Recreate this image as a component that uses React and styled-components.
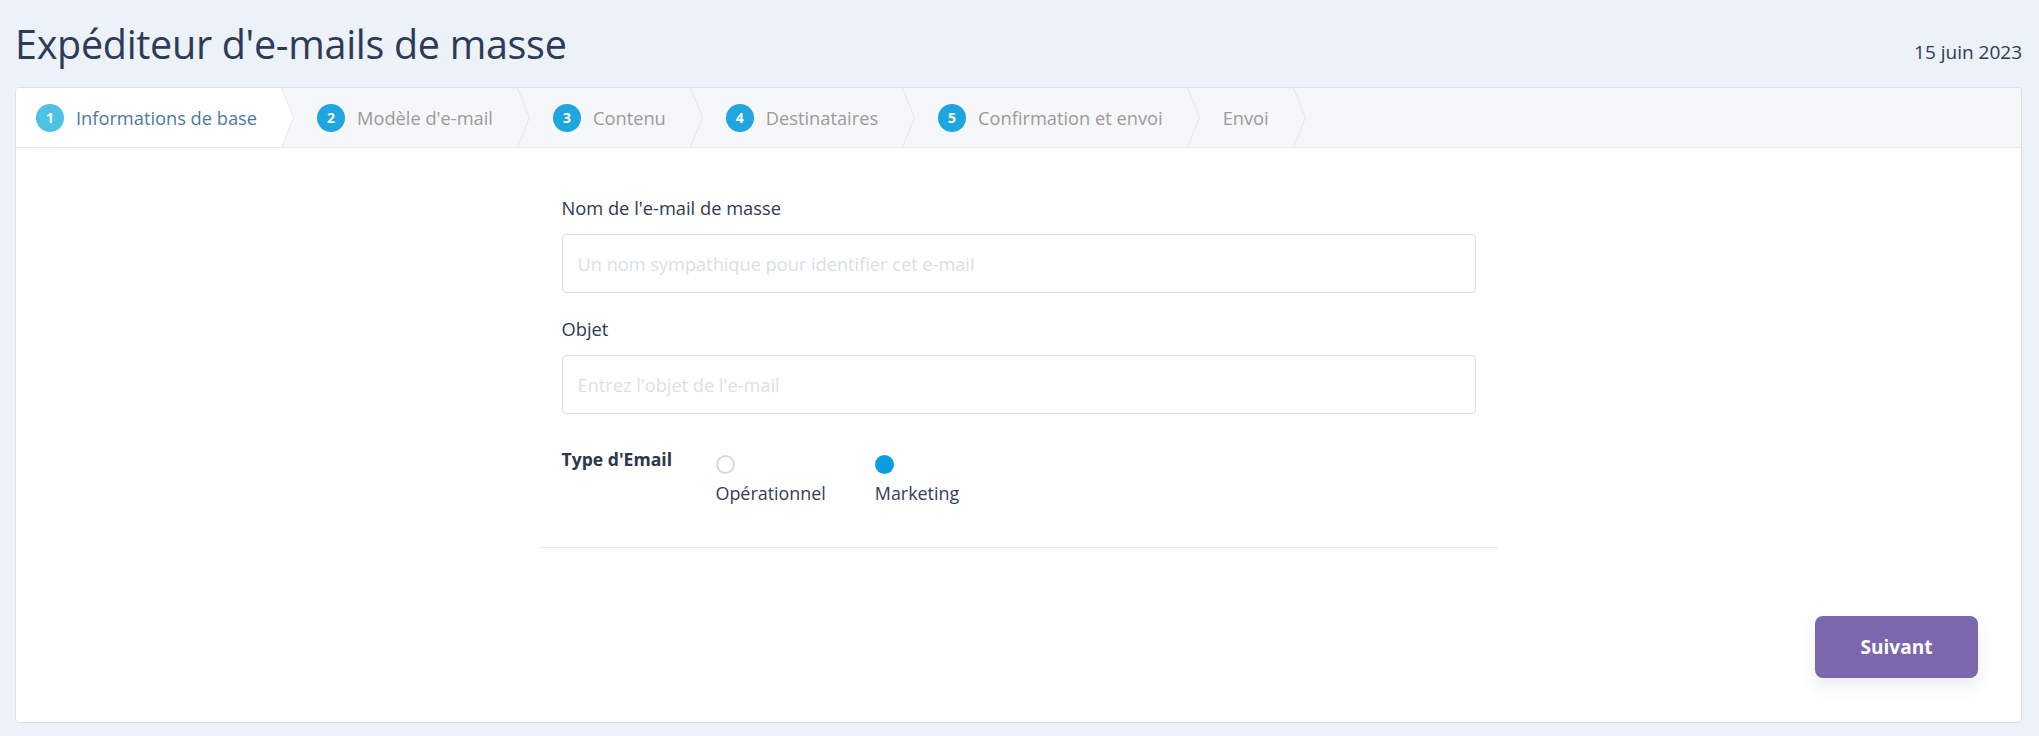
import React from "react";
import styled, { createGlobalStyle } from "styled-components";

const Global = createGlobalStyle`
  html, body { margin: 0; padding: 0; background: #edf1f8; }
  body { font-family: "Open Sans", "Noto Sans", sans-serif; color: #2c3a52; }
  * { box-sizing: border-box; }
`;

const Page = styled.div`
  padding: 0 17px 14px 15px;
  display: flex;
  flex-direction: column;
`;

const Header = styled.header`
  display: flex;
  justify-content: space-between;
  align-items: baseline;
  padding-top: 18px;
  margin-bottom: 17px;
`;

const Title = styled.h1`
  margin: 0;
  font-size: 39.5px;
  line-height: 52px;
  font-weight: 400;
  color: #2c3b57;
  letter-spacing: -0.3px;
`;

const DateText = styled.span`
  font-size: 19px;
  color: #2c3b57;
`;

const Card = styled.section`
  background: #fff;
  border: 1px solid #dbe0e8;
  border-radius: 4px;
  display: flex;
  flex-direction: column;
  overflow: hidden;
`;

const Steps = styled.nav`
  display: flex;
  height: 60px;
  background: #f6f7f9;
  border-bottom: 1px solid #e6e9ee;
`;

const Step = styled.div`
  position: relative;
  display: flex;
  align-items: center;
  gap: 12px;
  padding: 0 25px 0 ${(p) => (p.$first ? 20 : 35)}px;
  background: ${(p) => (p.$active ? "#fff" : "transparent")};
  font-size: 18.25px;
  color: ${(p) => (p.$active ? "#4a7aa3" : "#9a9a9a")};
  white-space: nowrap;

  &::after {
    content: "";
    position: absolute;
    top: 0;
    right: -12px;
    width: 12px;
    height: 100%;
    background: ${(p) => (p.$active ? "#fff" : "#f6f7f9")};
    clip-path: polygon(0 0, 100% 50%, 0 100%);
    z-index: 1;
  }
`;

const Chevron = styled.svg`
  position: absolute;
  top: 0;
  right: -13px;
  width: 14px;
  height: 59px;
  z-index: 2;
  overflow: visible;
`;

const StepNum = styled.span`
  display: inline-flex;
  align-items: center;
  justify-content: center;
  width: 28px;
  height: 28px;
  border-radius: 50%;
  background: ${(p) => (p.$active ? "#4fc1e4" : "#1fa6df")};
  color: #fff;
  font-size: 14px;
  font-weight: 700;
`;

const FormArea = styled.div`
  width: 958px;
  margin: 0 auto;
  padding: 46px 22px 40px;
  border-bottom: 1px solid #e8ebf0;
  display: flex;
  flex-direction: column;
`;

const Field = styled.div`
  display: flex;
  flex-direction: column;
  gap: 13px;
  margin-bottom: 22px;
`;

const Label = styled.label`
  font-size: 18.3px;
  line-height: 27px;
  color: #2d3a52;
`;

const Input = styled.input`
  height: 59px;
  border: 1px solid #d9dde8;
  border-radius: 4px;
  padding: 0 15px;
  font-family: inherit;
  font-size: 18.2px;
  color: #2d3a52;
  outline: none;
  &::placeholder { color: #d9dfea; }
`;

const TypeRow = styled.div`
  display: flex;
  align-items: flex-start;
  margin-top: 10px;
`;

const TypeLabel = styled.span`
  width: 154px;
  font-size: 17.6px;
  line-height: 27px;
  font-weight: 700;
  color: #2b374c;
`;

const Options = styled.div`
  display: flex;
  gap: 49px;
`;

const Option = styled.label`
  display: flex;
  flex-direction: column;
  align-items: flex-start;
  gap: 6px;
  padding-top: 9px;
  font-size: 17.9px;
  line-height: 27px;
  color: #33405a;
`;

const Radio = styled.span`
  width: 19px;
  height: 19px;
  border-radius: 50%;
  border: ${(p) => (p.$checked ? "none" : "2.5px solid #d4d8e3")};
  background: ${(p) => (p.$checked ? "#0b9de1" : "#fff")};
`;

const Footer = styled.div`
  display: flex;
  justify-content: flex-end;
  padding: 68px 43px 44px;
`;

const Button = styled.button`
  width: 163px;
  height: 62px;
  border: none;
  border-radius: 8px;
  background: #7a67ad;
  color: #fff;
  font-family: inherit;
  font-size: 19px;
  font-weight: 700;
  box-shadow: 0 8px 16px rgba(60, 70, 110, 0.1);
  cursor: pointer;
`;

const steps = [
  { n: 1, label: "Informations de base" },
  { n: 2, label: "Modèle d'e-mail" },
  { n: 3, label: "Contenu" },
  { n: 4, label: "Destinataires" },
  { n: 5, label: "Confirmation et envoi" },
  { n: null, label: "Envoi" },
];

export default function App() {
  return (
    <>
      <Global />
      <Page>
        <Header>
          <Title>Expéditeur d'e-mails de masse</Title>
          <DateText>15 juin 2023</DateText>
        </Header>
        <Card>
          <Steps>
            {steps.map((s, i) => (
              <Step key={s.label} $first={i === 0} $active={i === 0}>
                {s.n && <StepNum $active={i === 0}>{s.n}</StepNum>}
                {s.label}
                <Chevron viewBox="0 0 14 59">
                  <polyline points="0.5,0 12.5,29.5 0.5,59" fill="none" stroke="#e3e6eb" strokeWidth="1" />
                </Chevron>
              </Step>
            ))}
          </Steps>
          <FormArea>
            <Field>
              <Label>Nom de l'e-mail de masse</Label>
              <Input placeholder="Un nom sympathique pour identifier cet e-mail" />
            </Field>
            <Field>
              <Label>Objet</Label>
              <Input placeholder="Entrez l'objet de l'e-mail" />
            </Field>
            <TypeRow>
              <TypeLabel>Type d'Email</TypeLabel>
              <Options>
                <Option>
                  <Radio />
                  Opérationnel
                </Option>
                <Option>
                  <Radio $checked />
                  Marketing
                </Option>
              </Options>
            </TypeRow>
          </FormArea>
          <Footer>
            <Button>Suivant</Button>
          </Footer>
        </Card>
      </Page>
    </>
  );
}
